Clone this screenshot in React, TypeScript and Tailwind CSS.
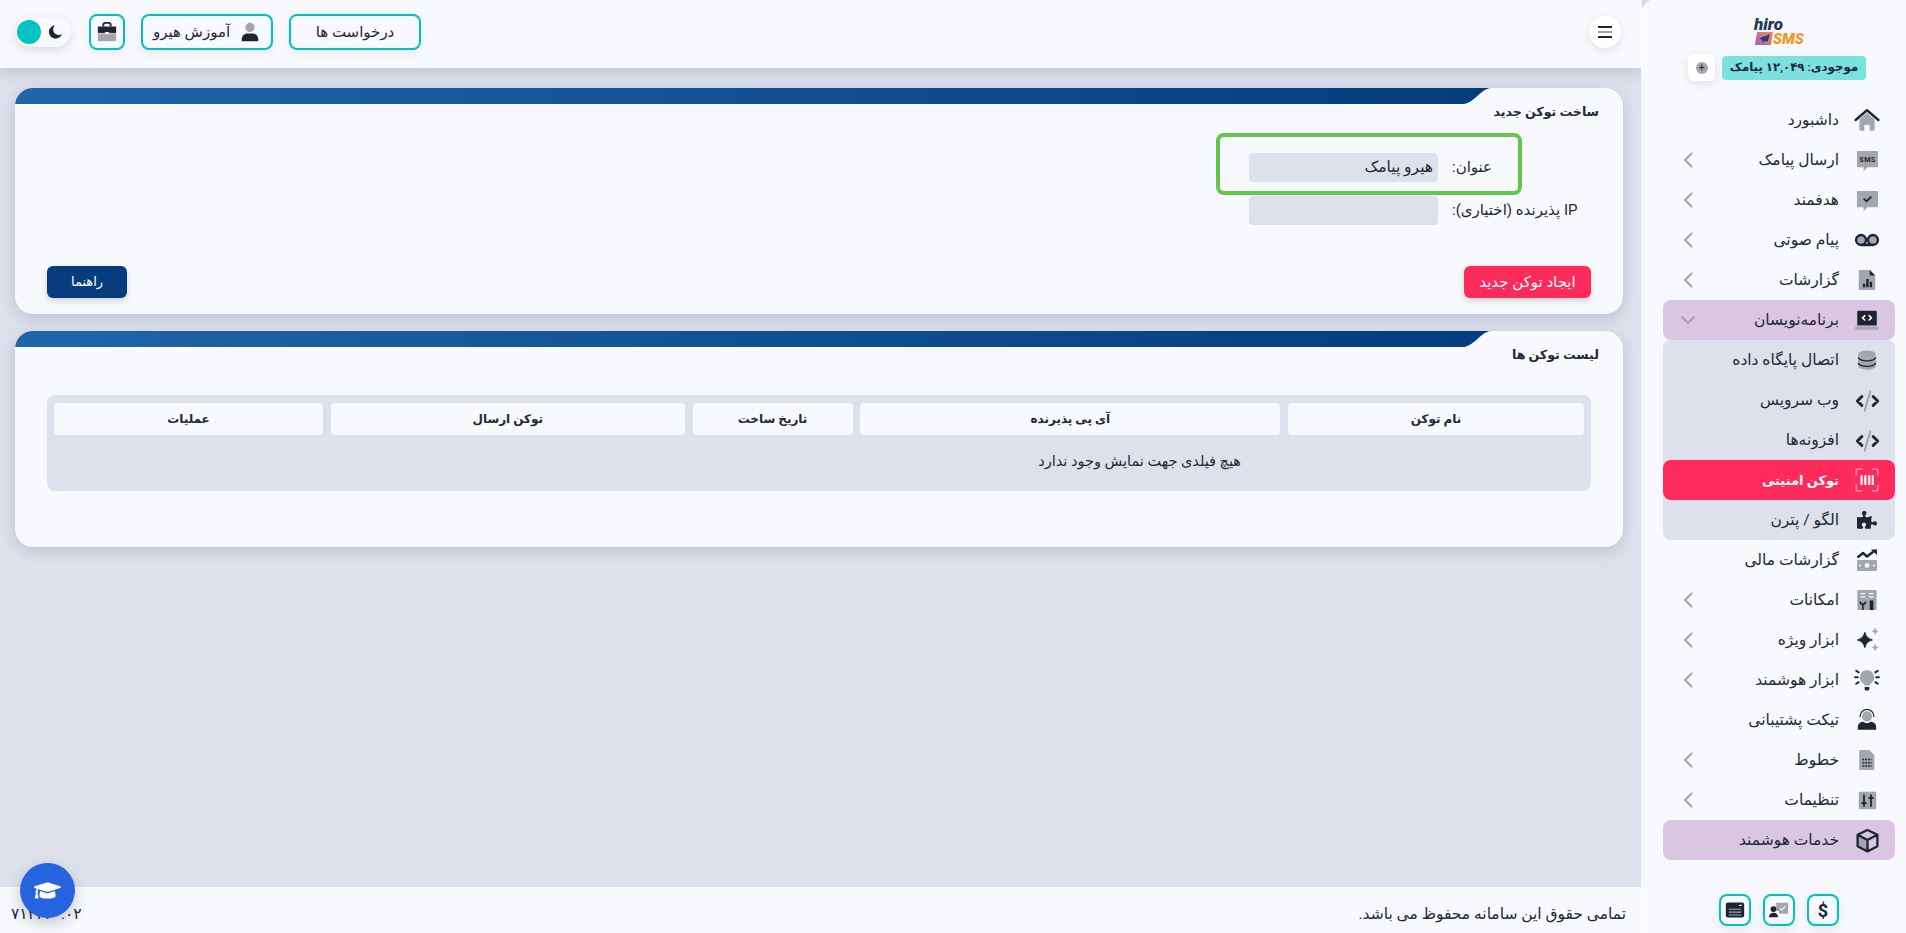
import type { ReactNode } from "react";
import { FaGraduationCap, FaPuzzlePiece } from "react-icons/fa";

const DARK = "#1f2433";
const GRAY = "#a4a6ad";

function Svg({ children, size = 24 }: { children: ReactNode; size?: number }) {
  return (
    <svg width={size} height={size} viewBox="0 0 24 24" fill="none">
      {children}
    </svg>
  );
}

const icons: Record<string, ReactNode> = {
  home: (
    <Svg size={26}>
      <path d="M5 11.500 12 5.500l7 6V21a1 1 0 0 1-1 1h-3.500v-5.500h-5V22H6a1 1 0 0 1-1-1z" fill={GRAY} />
      <path d="M1.500 12 12 3l10.500 9" stroke={DARK} strokeWidth="2.200" strokeLinecap="round" strokeLinejoin="round" />
    </Svg>
  ),
  sms: (
    <Svg size={23}>
      <path d="M2 2h20a1 1 0 0 1 1 1v15a1 1 0 0 1-1 1H12l-4 4v-4H2a1 1 0 0 1-1-1V3a1 1 0 0 1 1-1z" fill={GRAY} />
      <text x="12" y="13.500" textAnchor="middle" fontSize="7.500" fontWeight="700" fill={DARK} fontFamily="Roboto, sans-serif" letterSpacing="0.400">
        SMS
      </text>
    </Svg>
  ),
  target: (
    <Svg size={23}>
      <path d="M2 2h20a1 1 0 0 1 1 1v15a1 1 0 0 1-1 1H12l-4 4v-4H2a1 1 0 0 1-1-1V3a1 1 0 0 1 1-1z" fill={GRAY} />
      <path d="M8.500 10.500 11 13l4.500-4.500" stroke={DARK} strokeWidth="1.800" strokeLinecap="round" strokeLinejoin="round" />
    </Svg>
  ),
  voice: (
    <Svg size={26}>
      <circle cx="6.500" cy="12" r="3" fill={GRAY} />
      <circle cx="17.500" cy="12" r="3" fill={GRAY} />
      <path d="M6.500 16.500h11M6.500 7.500a4.500 4.500 0 1 0 0 9 4.500 4.500 0 0 0 0-9zM17.500 7.500a4.500 4.500 0 1 0 0 9 4.500 4.500 0 0 0 0-9z" stroke={DARK} strokeWidth="2.400" />
    </Svg>
  ),
  report: (
    <Svg size={22}>
      <path d="M4 1h11l6 6v15a1 1 0 0 1-1 1H4a1 1 0 0 1-1-1V2a1 1 0 0 1 1-1z" fill={GRAY} />
      <path d="M15 1l6 6h-6zM7.500 16h2.600v4H7.500zM11.200 11h2.600v9h-2.600zM15 14h2.600v6H15z" fill={DARK} />
    </Svg>
  ),
  laptop: (
    <Svg size={26}>
      <path d="M4 3.500h16a1 1 0 0 1 1 1V17H3V4.500a1 1 0 0 1 1-1z" fill={DARK} />
      <path d="M10 8 7.800 10l2.200 2M14 8l2.200 2-2.200 2" stroke="#ffffff" strokeWidth="1.400" strokeLinecap="round" strokeLinejoin="round" />
      <rect x="1" y="18" width="22" height="3" rx="1.200" fill={GRAY} />
    </Svg>
  ),
  database: (
    <Svg size={22}>
      <ellipse cx="12" cy="5.500" rx="9.500" ry="4" fill={GRAY} />
      <path d="M2.500 5.500v13c0 2.200 4.300 4 9.500 4s9.500-1.800 9.500-4v-13c0 2.200-4.300 4-9.500 4s-9.500-1.800-9.500-4z" fill={GRAY} />
      <path d="M2.500 9c0 2.200 4.300 4 9.500 4s9.500-1.800 9.500-4M2.500 15c0 2.200 4.300 4 9.500 4s9.500-1.800 9.500-4" stroke={DARK} strokeWidth="1.500" />
    </Svg>
  ),
  code: (
    <Svg size={27}>
      <path d="M7 8.500 3 12.500l4 4M17 8.500l4 4-4 4" stroke={DARK} strokeWidth="2.600" strokeLinecap="round" strokeLinejoin="round" />
      <path d="M14.500 4 9.500 21" stroke={GRAY} strokeWidth="1.800" strokeLinecap="round" />
    </Svg>
  ),
  token: (
    <Svg size={26}>
      <path d="M2 7V3a1 1 0 0 1 1-1h4M17 2h4a1 1 0 0 1 1 1v4M22 17v4a1 1 0 0 1-1 1h-4M7 22H3a1 1 0 0 1-1-1v-4" stroke="#ff8aa5" strokeWidth="1.600" strokeLinecap="round" />
      <path d="M6 7.500h2v9H6zM9.500 7.500h2v9h-2zM13 7.500h2v9h-2zM16.300 7.500h2v9h-2z" fill="#ffffff" />
    </Svg>
  ),
  puzzle: <FaPuzzlePiece size={20} color={DARK} />,
  finance: (
    <Svg size={24}>
      <rect x="2" y="12" width="20" height="11" rx="1" fill={GRAY} />
      <circle cx="12" cy="17.500" r="2.400" fill="#f7f9fd" />
      <path d="M5 17.500h.1M19 17.500h.1" stroke="#f7f9fd" strokeWidth="2" strokeLinecap="round" />
      <path d="M2.500 9.500 8 5l4 3.500 6.500-5" stroke={DARK} strokeWidth="2.400" strokeLinejoin="round" />
      <path d="M16 1.500h6V7z" fill={DARK} />
    </Svg>
  ),
  features: (
    <Svg size={22}>
      <rect x="1.500" y="1" width="21" height="22" rx="1.500" fill={GRAY} />
      <path d="M5 5h5M14 5h5M5 8.500h5M14 8.500h5" stroke="#f7f9fd" strokeWidth="1.400" />
      <path d="M4.500 13.500c0 2 1 3 3 3s3-1 3-3M7.500 16v7" stroke={DARK} strokeWidth="1.800" fill="none" />
      <path d="M15 12.500h4V23h-4z" fill={DARK} />
    </Svg>
  ),
  sparkle: (
    <Svg size={26}>
      <path d="M10 5c.8 4.200 2.600 6.200 7 7-4.400.8-6.200 2.800-7 7-.8-4.200-2.600-6.200-7-7 4.400-.8 6.200-2.800 7-7z" fill={DARK} stroke={DARK} strokeWidth="1" />
      <path d="M19.500 1c.3 1.900 1 2.700 2.800 3-1.800.3-2.500 1.100-2.800 3-.3-1.900-1-2.700-2.800-3 1.800-.3 2.500-1.100 2.800-3zM19.500 16c.3 1.900 1 2.700 2.800 3-1.800.3-2.500 1.100-2.800 3-.3-1.900-1-2.700-2.800-3 1.800-.3 2.500-1.100 2.800-3z" fill={GRAY} stroke={GRAY} strokeWidth=".6" />
    </Svg>
  ),
  bulb: (
    <Svg size={26}>
      <path d="M12 3a6.500 6.500 0 0 0-3.500 12c.7.500 1 1.200 1 2h5c0-.8.3-1.500 1-2A6.500 6.500 0 0 0 12 3z" fill={GRAY} />
      <path d="M9.800 18.500h4.400v1.800a1.500 1.500 0 0 1-1.500 1.500h-1.400a1.500 1.500 0 0 1-1.500-1.500z" fill={DARK} />
      <path d="M1 9.500h2.500M20.500 9.500H23M2 3.500l2.300 1.500M22 3.500 19.700 5M2 15.500 4.300 14M22 15.500 19.700 14" stroke={DARK} strokeWidth="1.800" strokeLinecap="round" />
    </Svg>
  ),
  support: (
    <Svg size={22}>
      <circle cx="12" cy="8" r="5.500" fill={GRAY} />
      <path d="M4.500 9V8a7.500 7.500 0 0 1 15 0v1" stroke={DARK} strokeWidth="1.300" />
      <path d="M2 22.500v-3c0-3 3-5.500 6-5.500 1 1 2.500 1.500 4 1.500s3-.5 4-1.500c3 0 6 2.500 6 5.500v3z" fill={DARK} />
    </Svg>
  ),
  sim: (
    <Svg size={22}>
      <path d="M4.500 1h10L20 6.500V22a1 1 0 0 1-1 1H4.500a1 1 0 0 1-1-1V2a1 1 0 0 1 1-1z" fill={GRAY} />
      <path d="M7 11.500h10M7 15h10M7 18.500h10" stroke={DARK} strokeWidth="1.500" strokeDasharray="2 1" />
    </Svg>
  ),
  settings: (
    <Svg size={21}>
      <rect x="2" y="2" width="20" height="20" rx="1.500" fill={GRAY} />
      <path d="M8 5v14M16 5v14M5 15h6M13 9h6" stroke={DARK} strokeWidth="2" />
    </Svg>
  ),
  box: (
    <Svg size={25}>
      <path d="M12 11.500 3 7v10l9 5z" fill={GRAY} />
      <path d="M12 2 21.500 6.500v11L12 22.500 2.500 17.500v-11zM2.500 6.500 12 11.500l9.500-5M12 11.500v11" stroke={DARK} strokeWidth="2.200" strokeLinejoin="round" />
    </Svg>
  ),
};

type Item = {
  label: string;
  icon: string;
  chevron?: "left" | "down";
  tone?: "purple" | "active";
};

const topItems: Item[] = [
  { label: "داشبورد", icon: "home" },
  { label: "ارسال پیامک", icon: "sms", chevron: "left" },
  { label: "هدفمند", icon: "target", chevron: "left" },
  { label: "پیام صوتی", icon: "voice", chevron: "left" },
  { label: "گزارشات", icon: "report", chevron: "left" },
  { label: "برنامه‌نویسان", icon: "laptop", chevron: "down", tone: "purple" },
];

const subItems: Item[] = [
  { label: "اتصال پایگاه داده", icon: "database" },
  { label: "وب سرویس", icon: "code" },
  { label: "افزونه‌ها", icon: "code" },
  { label: "توکن امنیتی", icon: "token", tone: "active" },
  { label: "الگو / پترن", icon: "puzzle" },
];

const bottomItems: Item[] = [
  { label: "گزارشات مالی", icon: "finance" },
  { label: "امکانات", icon: "features", chevron: "left" },
  { label: "ابزار ویژه", icon: "sparkle", chevron: "left" },
  { label: "ابزار هوشمند", icon: "bulb", chevron: "left" },
  { label: "تیکت پشتیبانی", icon: "support" },
  { label: "خطوط", icon: "sim", chevron: "left" },
  { label: "تنظیمات", icon: "settings", chevron: "left" },
  { label: "خدمات هوشمند", icon: "box", tone: "purple" },
];

function NavRow({ item }: { item: Item }) {
  const tone =
    item.tone === "active"
      ? "bg-[#ff2a5c] text-white font-bold text-[13px]"
      : item.tone === "purple"
        ? "bg-[#dac6e3] text-[#23283a] text-[15.500px]"
        : "text-[#23283a] text-[15.500px]";
  return (
    <div className={`flex h-10 items-center rounded-lg ${tone}`}>
      <span className="flex w-[56px] shrink-0 items-center justify-center">{icons[item.icon]}</span>
      <span className="flex-1 pt-[2px]">{item.label}</span>
      {item.chevron === "left" && (
        <svg className="ml-[19px]" width="12" height="16" viewBox="0 0 12 16" fill="none">
          <path d="M9.500 1.500 3 8l6.500 6.500" stroke="#9fa2a9" strokeWidth="2" strokeLinecap="round" strokeLinejoin="round" />
        </svg>
      )}
      {item.chevron === "down" && (
        <svg className="ml-[17px]" width="16" height="12" viewBox="0 0 16 12" fill="none">
          <path d="M2 3l6 6 6-6" stroke="#9fa2a9" strokeWidth="2" strokeLinecap="round" strokeLinejoin="round" />
        </svg>
      )}
    </div>
  );
}

function Logo() {
  return (
    <div dir="ltr" className="flex h-[30px] w-[50px] flex-col" style={{ fontFamily: "Roboto, sans-serif" }}>
      <span className="text-[17px] leading-[15px] font-black italic text-[#1d3a5c]">hiro</span>
      <span className="flex items-center">
        <svg width="19" height="15" viewBox="0 0 19 15">
          <defs>
            <linearGradient id="logo-plane" x1="0" y1="1" x2="1" y2="0">
              <stop offset="0" stopColor="#a45fc4" />
              <stop offset="1" stopColor="#f48a4f" />
            </linearGradient>
          </defs>
          <path d="M3 0h16l-2 13H1z" fill="url(#logo-plane)" />
          <path d="M16 2 5 6.500l3 1.300 1 3 2-2 2.500 1z" fill="#26406b" />
        </svg>
        <span className="text-[15px] leading-[15px] font-black italic text-[#f7931e]">SMS</span>
      </span>
    </div>
  );
}

function Sidebar() {
  return (
    <aside className="z-20 flex h-full w-[264px] shrink-0 flex-col rounded-tl-[14px] bg-[#f7f9fd] pl-[11px] shadow-[0_0_0_1px_rgba(255,255,255,0.8)]">
      <div className="flex h-[100px] shrink-0 flex-col items-center">
        <div className="mt-[17px] ml-[-1px]">
          <Logo />
        </div>
        <div className="mt-[7px] ml-[-5px] flex items-center gap-[7px]">
          <div className="flex h-6 w-[144px] items-center justify-center rounded bg-[#7ae0e0] text-[11.800px] font-semibold text-[#23283a]">
            موجودی: ۱۲,۰۴۹ پیامک
          </div>
          <div className="flex h-[27px] w-[27px] items-center justify-center rounded-md bg-white shadow-[0_3px_8px_rgba(0,0,0,0.1)]">
            <span className="flex h-[12px] w-[12px] items-center justify-center rounded-full bg-[#a4a6ad] text-[11px] leading-none text-[#23283a]">+</span>
          </div>
        </div>
      </div>
      <nav className="mr-[11px] ml-[10px] flex flex-col">
        {topItems.map((item) => (
          <NavRow key={item.label} item={item} />
        ))}
        <div className="rounded-lg bg-[#dde1ec]">
          {subItems.map((item) => (
            <NavRow key={item.label} item={item} />
          ))}
        </div>
        {bottomItems.map((item) => (
          <NavRow key={item.label} item={item} />
        ))}
      </nav>
      <div className="mt-[34px] ml-[-1px] flex justify-center gap-3">
        <SquareBtn>
          <span className="text-[18px] font-bold text-[#1f2433]" style={{ fontFamily: "Roboto, sans-serif" }}>$</span>
        </SquareBtn>
        <SquareBtn>
          <Svg size={22}>
            <path d="M9 4h13v12H12v-3H9z" fill={GRAY} />
            <path d="m13 10 2 2 4-4" stroke="#f7f9fd" strokeWidth="1.200" />
            <circle cx="6" cy="11" r="3.200" fill={DARK} />
            <path d="M1 20c0-3 2-5 5-5s5 2 5 5z" fill={DARK} />
          </Svg>
        </SquareBtn>
        <SquareBtn>
          <Svg size={20}>
            <rect x="1" y="3" width="22" height="18" rx="2.500" fill={DARK} />
            <path d="M4.500 11h15M4.500 14.500h15M4.500 18h15" stroke={GRAY} strokeWidth="1.300" />
            <path d="M17 6.500h3" stroke="#f7f9fd" strokeWidth="1.500" />
          </Svg>
        </SquareBtn>
      </div>
    </aside>
  );
}

function SquareBtn({ children }: { children: ReactNode }) {
  return (
    <div className="flex h-8 w-8 items-center justify-center rounded-lg border-2 border-[#00c2c2] bg-[#f7f9fd] shadow-[0_4px_10px_rgba(0,0,0,0.08)]">
      {children}
    </div>
  );
}

function PillButton({ children }: { children: ReactNode }) {
  return (
    <div className="flex h-9 w-[132px] items-center justify-center gap-[9px] rounded-lg border-2 border-[#00c2c2] bg-[#f7f9fd] text-[15px] text-[#23283a] shadow-[0_4px_10px_rgba(0,0,0,0.06)]">
      {children}
    </div>
  );
}

function Header() {
  return (
    <header className="relative z-10 flex h-[68px] shrink-0 items-center justify-between bg-[#f7f9fd] pr-[21px] pb-1 pl-[15px] shadow-[0_2px_14px_rgba(40,50,90,0.22)]">
      <div className="flex h-8 w-8 flex-col items-center justify-center gap-[3px] rounded-full bg-white shadow-[0_3px_8px_rgba(0,0,0,0.1)]">
        <span className="h-[2px] w-[14px] bg-[#1f2433]" />
        <span className="h-[2px] w-[14px] bg-[#a4a6ad]" />
        <span className="h-[2px] w-[14px] bg-[#1f2433]" />
      </div>
      <div className="flex items-center">
        <PillButton>درخواست ها</PillButton>
        <div className="mr-4">
          <PillButton>
            <Svg size={22}>
              <circle cx="12" cy="7" r="5" fill={GRAY} />
              <path d="M3 22v-2c0-4 3-6.500 6-6.500h6c3 0 6 2.500 6 6.500v2z" fill={DARK} />
            </Svg>
            آموزش هیرو
          </PillButton>
        </div>
        <div className="mr-4 flex h-9 w-9 items-center justify-center rounded-lg border-2 border-[#00c2c2] shadow-[0_4px_10px_rgba(0,0,0,0.06)]">
          <Svg size={22}>
            <path d="M8 6V4a2 2 0 0 1 2-2h4a2 2 0 0 1 2 2v2" stroke={DARK} strokeWidth="2" />
            <path d="M2 6h20v7H2z" fill={DARK} />
            <path d="M2 13.500h20V22H2z" fill={GRAY} />
            <rect x="10" y="12" width="4" height="2.500" fill="#f7f9fd" />
          </Svg>
        </div>
        <div dir="ltr" className="mr-[18px] flex h-[30px] w-[56px] items-center rounded-full bg-[#f7f9fd] pl-[2px] shadow-[0_3px_10px_rgba(0,0,0,0.12)]">
          <span className="h-6 w-6 rounded-full bg-[#00c2c2]" />
          <svg className="ml-[7px]" width="16" height="16" viewBox="0 0 24 24">
            <path d="M21 14.500A10 10 0 1 1 10.500 2a8 8 0 0 0 10.500 12.500z" fill={DARK} />
          </svg>
        </div>
      </div>
    </header>
  );
}

function Card({ title, children }: { title: string; children: ReactNode }) {
  return (
    <section className="overflow-hidden rounded-[18px] bg-[#f7f9fd] shadow-[0_4px_14px_rgba(40,50,90,0.18)]">
      <div className="flex h-4" dir="ltr">
        <div className="w-[1448px] bg-gradient-to-r from-[#2066a8] to-[#053c7e]" />
        <svg width="28" height="16" viewBox="0 0 28 16">
          <path d="M0 0h28C17 1 12 15 0 16z" fill="#053c7e" />
        </svg>
      </div>
      <h2 className="h-[48px] pt-[1px] pr-[24px] text-[12.600px] leading-[14px] font-bold text-[#23283a]">{title}</h2>
      {children}
    </section>
  );
}

const columns = [
  { label: "نام توکن", width: "w-[296px]" },
  { label: "آی پی پذیرنده", width: "w-[420px]" },
  { label: "تاریخ ساخت", width: "w-[160px]" },
  { label: "توکن ارسال", width: "w-[354px]" },
  { label: "عملیات", width: "w-[269px]" },
];

function Field({ label, value }: { label: string; value?: string }) {
  return (
    <div className="flex items-center gap-[14px] pr-[43px]">
      <label className="w-[128px] text-left text-[15px] whitespace-nowrap text-[#23283a]">{label}</label>
      <div className="flex h-[29px] w-[189px] items-center rounded bg-[#dde1ec] px-[5px] text-[15.500px] text-[#23283a]">{value}</div>
    </div>
  );
}

export default function App() {
  return (
    <div
      dir="rtl"
      className="relative flex h-[933px] overflow-hidden bg-[#dde1ec]"
      style={{ fontFamily: "Roboto, 'DejaVu Sans', sans-serif" }}
    >
      <Sidebar />
      <main className="flex min-w-0 flex-1 flex-col">
        <Header />
        <div className="flex flex-1 flex-col gap-[17px] pt-5 pr-[19px] pl-[15px]">
          <Card title="ساخت توکن جدید">
            <div className="mt-[1px] flex flex-col gap-[14px]">
              <Field label="عنوان:" value="هیرو پیامک" />
              <Field label="IP پذیرنده (اختیاری):" />
            </div>
            <div className="mt-[41px] flex h-[48px] justify-between px-8">
              <button className="h-8 w-[127px] rounded-md bg-[#ff2a5c] text-[15px] text-white shadow-[0_3px_6px_rgba(0,0,0,0.15)]">ایجاد توکن جدید</button>
              <button className="h-8 w-[80px] rounded-md bg-[#053c7e] text-[13px] text-white shadow-[0_3px_6px_rgba(0,0,0,0.15)]">راهنما</button>
            </div>
          </Card>
          <Card title="لیست توکن ها">
            <div className="mx-8 mb-[56px] h-[96px] rounded-lg bg-[#dde1ec] px-[7px] pt-2">
              <div className="flex justify-between">
                {columns.map((col) => (
                  <div key={col.label} className={`${col.width} flex h-8 items-center justify-center rounded bg-[#f7f9fd] text-[12px] font-bold text-[#23283a]`}>
                    {col.label}
                  </div>
                ))}
              </div>
              <p className="mt-[16px] pr-[343px] text-[14.500px] text-[#23283a]">هیچ فیلدی جهت نمایش وجود ندارد</p>
            </div>
          </Card>
        </div>
        <footer className="flex h-[46px] shrink-0 items-center justify-between bg-[#f7f9fd] pt-[10px] pr-[16px] pl-[11px] text-[15.500px] text-[#23283a]">
          <span>تمامی حقوق این سامانه محفوظ می باشد.</span>
          <span dir="ltr">۷۱۲۲۲۰.۰۲</span>
        </footer>
      </main>
      {/* annotation drawn over the form */}
      <div className="pointer-events-none absolute top-[133px] left-[1216px] h-[62px] w-[306px] rounded-lg border-4 border-[#63c54a]" />
      <div className="absolute top-[863px] left-[20px] z-30 flex h-[55px] w-[55px] items-center justify-center rounded-full bg-[#2563e0] shadow-[0_6px_16px_rgba(0,0,0,0.2)]">
        <FaGraduationCap size={27} color="#ffffff" />
      </div>
    </div>
  );
}
